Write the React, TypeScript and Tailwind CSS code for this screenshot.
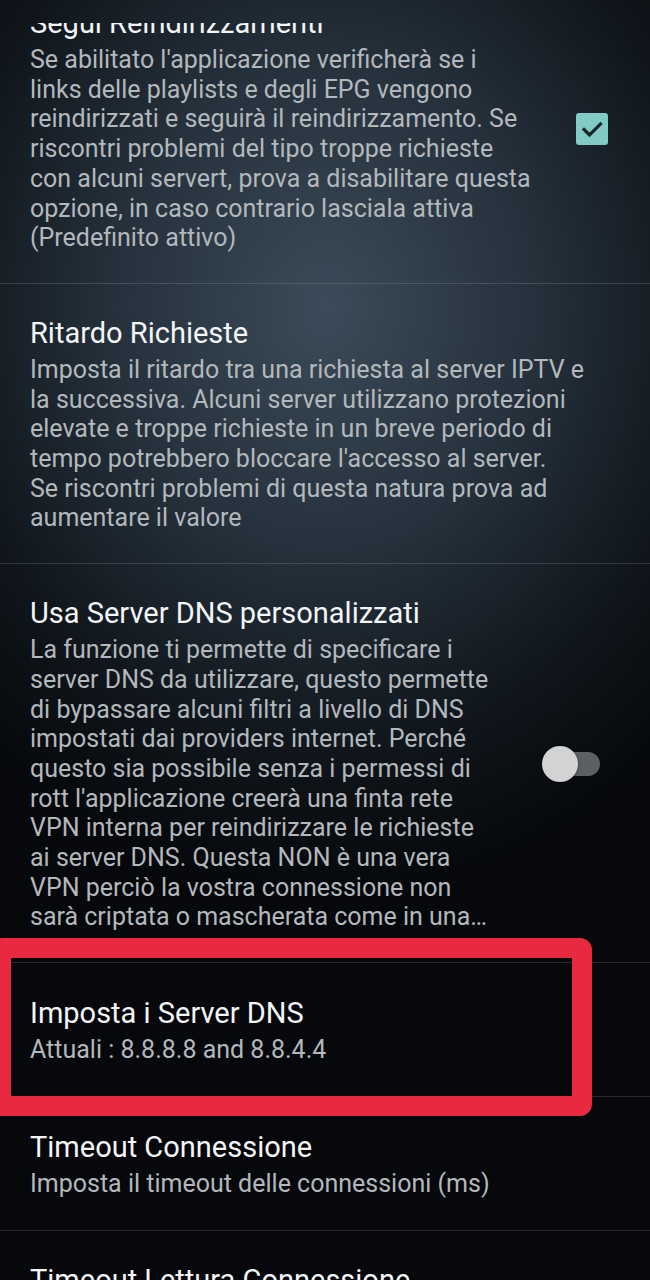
import React from 'react';

type Pref = {
  title: string;
  lines: string[];
  widget?: 'checkbox' | 'switch';
  tall?: boolean;
};

const prefs: Pref[] = [
  {
    title: 'Segui Reindirizzamenti',
    lines: [
      "Se abilitato l'applicazione verificherà se i",
      'links delle playlists e degli EPG vengono',
      'reindirizzati e seguirà il reindirizzamento. Se',
      'riscontri problemi del tipo troppe richieste',
      'con alcuni servert, prova a disabilitare questa',
      'opzione, in caso contrario lasciala attiva',
      '(Predefinito attivo)',
    ],
    widget: 'checkbox',
  },
  {
    title: 'Ritardo Richieste',
    lines: [
      'Imposta il ritardo tra una richiesta al server IPTV e',
      'la successiva. Alcuni server utilizzano protezioni',
      'elevate e troppe richieste in un breve periodo di',
      "tempo potrebbero bloccare l'accesso al server.",
      'Se riscontri problemi di questa natura prova ad',
      'aumentare il valore',
    ],
  },
  {
    title: 'Usa Server DNS personalizzati',
    lines: [
      'La funzione ti permette di specificare i',
      'server DNS da utilizzare, questo permette',
      'di bypassare alcuni filtri a livello di DNS',
      'impostati dai providers internet. Perché',
      'questo sia possibile senza i permessi di',
      "rott l'applicazione creerà una finta rete",
      'VPN interna per reindirizzare le richieste',
      'ai server DNS. Questa NON è una vera',
      'VPN perciò la vostra connessione non',
      'sarà criptata o mascherata come in una…',
    ],
    widget: 'switch',
  },
  {
    title: 'Imposta i Server DNS',
    lines: ['Attuali : 8.8.8.8 and 8.8.4.4'],
    tall: true,
  },
  {
    title: 'Timeout Connessione',
    lines: ['Imposta il timeout delle connessioni (ms)'],
    tall: true,
  },
  {
    title: 'Timeout Lettura Connessione',
    lines: ['Imposta il timeout di lettura (ms)'],
  },
];

const CheckBox = () => (
  <div className="w-[32px] h-[32px] rounded-[3px] bg-[#80cbc4] flex items-center justify-center mr-[42px]">
    <svg width="32" height="32" viewBox="0 0 32 32" fill="none">
      <path d="M8 16.5 L13.5 22 L24.5 11" stroke="#1b2629" strokeWidth="3.2" strokeLinecap="square" />
    </svg>
  </div>
);

const Switch = () => (
  <div className="relative w-[52px] h-[24px] rounded-full bg-[#5c6065] mr-[50px]">
    <div className="absolute left-[-6px] top-[-6px] w-[36px] h-[36px] rounded-full bg-[#d3d3d3] shadow-[0_1px_3px_rgba(0,0,0,0.5)]" />
  </div>
);

const PrefRow = ({ pref }: { pref: Pref }) => (
  <div
    className={
      pref.tall
        ? 'flex items-center pl-[30px] pt-[33px] pb-[31px] border-b border-white/[0.13]'
        : 'flex items-center pl-[30px] pt-[32px] pb-[30px] border-b border-white/[0.13]'
    }
  >
    <div className="flex-1 min-w-0">
      <div className="text-[29px] leading-[34px] text-[#f3f5f6] whitespace-nowrap">{pref.title}</div>
      <div className="mt-[5px] text-[25px] leading-[29.7px] text-[#b3b8bc]">
        {pref.lines.map((l, i) => (
          <div key={i} className="whitespace-nowrap">{l}</div>
        ))}
      </div>
    </div>
    {pref.widget === 'checkbox' && <CheckBox />}
    {pref.widget === 'switch' && <Switch />}
  </div>
);

export default function App() {
  return (
    <div className="relative w-[650px] h-[1280px] overflow-hidden bg-[#06080b] bg-[radial-gradient(ellipse_78%_46%_at_50%_24%,#3b4b59_0%,#26323d_40%,#10161c_75%,#06080b_100%)] font-[family-name:Roboto,sans-serif]">
      <div className="h-[23px]" />
      <div className="h-[1257px] overflow-hidden">
        <div className="-mt-[49px]">
          {prefs.map((p, i) => (
            <PrefRow key={i} pref={p} />
          ))}
        </div>
      </div>
      {/* red highlight over the DNS row */}
      <div className="absolute left-[-9px] top-[938px] w-[601px] h-[178px] border-[20px] border-[#e8293f] rounded-[12px]" />
    </div>
  );
}
